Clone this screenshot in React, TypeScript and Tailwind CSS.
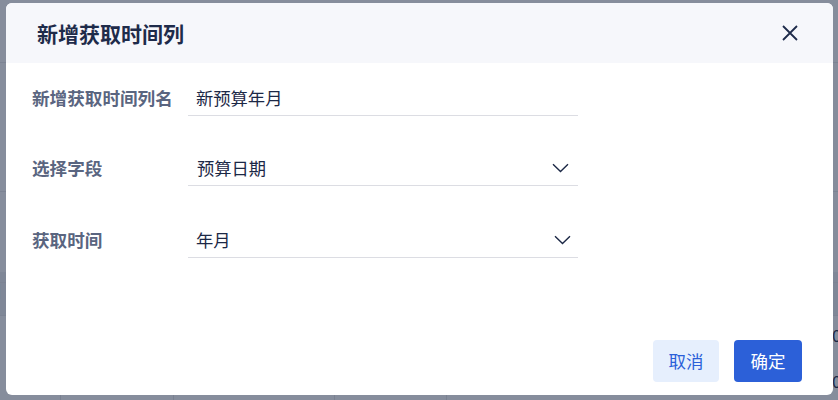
import React from "react";

const Chevron = () => (
  <svg width="17" height="10" viewBox="0 0 17 10" fill="none">
    <path d="M1 1.2 L8.5 8.5 L16 1.2" stroke="#1c2846" strokeWidth="1.4" />
  </svg>
);

const CloseIcon = () => (
  <svg width="16" height="16" viewBox="0 0 16 16" fill="none">
    <path d="M1 1 L15 15 M15 1 L1 15" stroke="#1e2b4a" strokeWidth="1.8" />
  </svg>
);

export default function App() {
  const font = { fontFamily: '"Noto Sans CJK SC", "Noto Sans", sans-serif' };
  return (
    <div className="relative w-[838px] h-[400px] overflow-hidden bg-[#868d9c]" style={font}>
      {/* backdrop hints */}
      <div className="absolute left-0 top-[62px] w-[838px] h-px bg-[#7c8393]" />
      <div className="absolute left-0 top-[191px] w-[838px] h-px bg-[#7c8393]" />
      <div className="absolute left-0 top-[272px] w-[838px] h-[43px] bg-[#7f8797]" />
      <div className="absolute left-0 top-[282px] w-[838px] h-px bg-[#7c8393]" />
      <div className="absolute left-0 top-[315px] w-[838px] h-px bg-[#7c8393]" />
      <div className="absolute left-[60px] top-[395px] w-px h-[5px] bg-[#7a8191]" />
      <div className="absolute left-[173px] top-[395px] w-px h-[5px] bg-[#7a8191]" />
      <div className="absolute left-[334px] top-[395px] w-px h-[5px] bg-[#7a8191]" />
      <div className="absolute left-[446px] top-[395px] w-px h-[5px] bg-[#7a8191]" />
      <div className="absolute left-[-4px] top-[282px] text-[15px] leading-none text-[#1c2846]">]</div>
      <div className="absolute left-[832px] top-[326px] text-[17px] leading-none text-[#1c2846]">0</div>
      <div className="absolute left-[832px] top-[372px] text-[17px] leading-none text-[#1c2846]">0</div>

      {/* dialog */}
      <div className="absolute left-[6px] top-[3px] w-[827px] h-[392px] rounded-[6px] bg-white flex flex-col overflow-hidden">
        <div className="h-[60px] shrink-0 bg-[#f6f7fb] flex items-center justify-between pl-[31px] pr-[35px]">
          <span className="text-[21px] font-bold text-[#1e2b4a] leading-none">新增获取时间列</span>
          <CloseIcon />
        </div>

        <div className="flex flex-col pl-[26px] pt-[18px]">
          <div className="flex items-center h-[35px]">
            <div className="w-[156px] text-[17.6px] font-semibold text-[#5a6580]">新增获取时间列名</div>
            <div className="w-[390px] h-[35px] border-b border-[#dcdde3] flex items-center pl-[8px] text-[17.3px] text-[#1c2846]">
              新预算年月
            </div>
          </div>
          <div className="flex items-center h-[35px] mt-[35px]">
            <div className="w-[156px] text-[17.6px] font-semibold text-[#5a6580]">选择字段</div>
            <div className="w-[390px] h-[35px] border-b border-[#dcdde3] flex items-center justify-between pl-[9px] pr-[9px] text-[17.3px] text-[#1c2846]">
              <span>预算日期</span>
              <Chevron />
            </div>
          </div>
          <div className="flex items-center h-[35px] mt-[37px]">
            <div className="w-[156px] text-[17.6px] font-semibold text-[#5a6580]">获取时间</div>
            <div className="w-[390px] h-[35px] border-b border-[#dcdde3] flex items-center justify-between pl-[8px] pr-[7px] text-[17.3px] text-[#1c2846]">
              <span>年月</span>
              <Chevron />
            </div>
          </div>
        </div>

        <div className="mt-auto flex justify-end gap-[15px] pr-[31px] pb-[13px]">
          <button className="w-[66px] h-[42px] rounded-[4px] bg-[#e6effd] text-[#2b5fd9] text-[17.5px]">取消</button>
          <button className="w-[68px] h-[42px] rounded-[4px] bg-[#2c60d8] text-white text-[17.5px]">确定</button>
        </div>
      </div>
    </div>
  );
}
